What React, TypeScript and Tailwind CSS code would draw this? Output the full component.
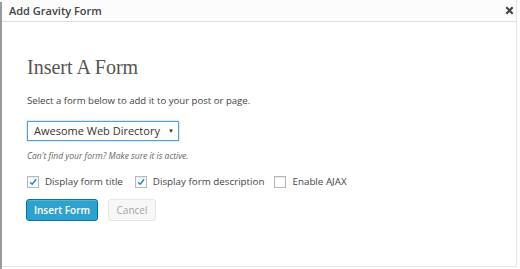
import React from "react";

function Check({ checked }: { checked: boolean }) {
    return (
        <span className="w-[12px] h-[12px] border border-[#b4b9be] bg-white flex items-center justify-center shadow-[inset_0_1px_2px_rgba(0,0,0,0.1)]">
            {checked && (
                <svg width="12" height="12" viewBox="0 0 12 12">
                    <path d="M2.5 6.2 L5 8.6 L9.8 2.8" fill="none" stroke="#1e8cbe" strokeWidth="1.8" />
                </svg>
            )}
        </span>
    );
}

export default function App() {
    const sans = { fontFamily: '"Open Sans", "Noto Sans", sans-serif' };
    return (
        <div className="w-[520px] h-[269px] bg-white flex overflow-hidden" style={sans}>
            <div className="w-[2px] bg-[#9a9a9a] mt-[2px]" />
            <div className="w-[515px] h-[267px] flex flex-col border-b border-r border-[#e5e5e5]">
                {/* header */}
                <div className="h-[22px] bg-[#fcfcfc] border-b border-[#dddddd] flex items-center justify-between pl-[7px] pr-[2px]">
                    <span className="text-[11px] font-semibold text-[#444] leading-none">Add Gravity Form</span>
                    <svg width="9" height="9" viewBox="0 0 10 10">
                        <path d="M1.5 1.5 L8.5 8.5 M8.5 1.5 L1.5 8.5" stroke="#444" strokeWidth="2.4" />
                    </svg>
                </div>

                <div className="flex flex-col pl-[25px] pt-[35px]">
                    <h2 className="text-[20px] leading-none text-[#555]" style={{ fontFamily: '"Liberation Serif", Georgia, serif' }}>
                        Insert A Form
                    </h2>
                    <p className="text-[9.6px] text-[#444] mt-[19px] leading-none">
                        Select a form below to add it to your post or page.
                    </p>
                    <div className="mt-[15px] w-[152px] h-[20px] border border-[#5b9dd9] flex items-center justify-between pl-[6px] pr-[4px] shadow-[0_0_2px_rgba(30,140,190,0.5)]">
                        <span className="text-[11px] text-[#333] leading-none">Awesome Web Directory</span>
                        <span className="text-[6px] text-[#333] leading-none">▼</span>
                    </div>
                    <p className="text-[8.5px] italic text-[#666] mt-[11px] leading-none">
                        Can't find your form? Make sure it is active.
                    </p>
                    <div className="flex items-center mt-[16px] text-[9.8px] text-[#444] leading-none">
                        <Check checked />
                        <span className="ml-[6px]">Display form title</span>
                        <span className="ml-[12px]"><Check checked /></span>
                        <span className="ml-[6px]">Display form description</span>
                        <span className="ml-[10px]"><Check checked={false} /></span>
                        <span className="ml-[6px]">Enable AJAX</span>
                    </div>
                    <div className="flex items-center gap-[10px] mt-[11px] -ml-[1px]">
                        <button className="w-[72px] h-[22px] rounded-[3px] bg-[#2ea2cc] border border-[#0074a2] text-white text-[10px] font-semibold leading-none shadow-[inset_0_1px_0_rgba(120,200,230,0.5)]">
                            Insert Form
                        </button>
                        <button className="w-[48px] h-[22px] rounded-[3px] bg-[#f7f7f7] border border-[#e5e5e5] text-[#a0a5aa] text-[10px] leading-none">
                            Cancel
                        </button>
                    </div>
                </div>
            </div>
        </div>
    );
}
